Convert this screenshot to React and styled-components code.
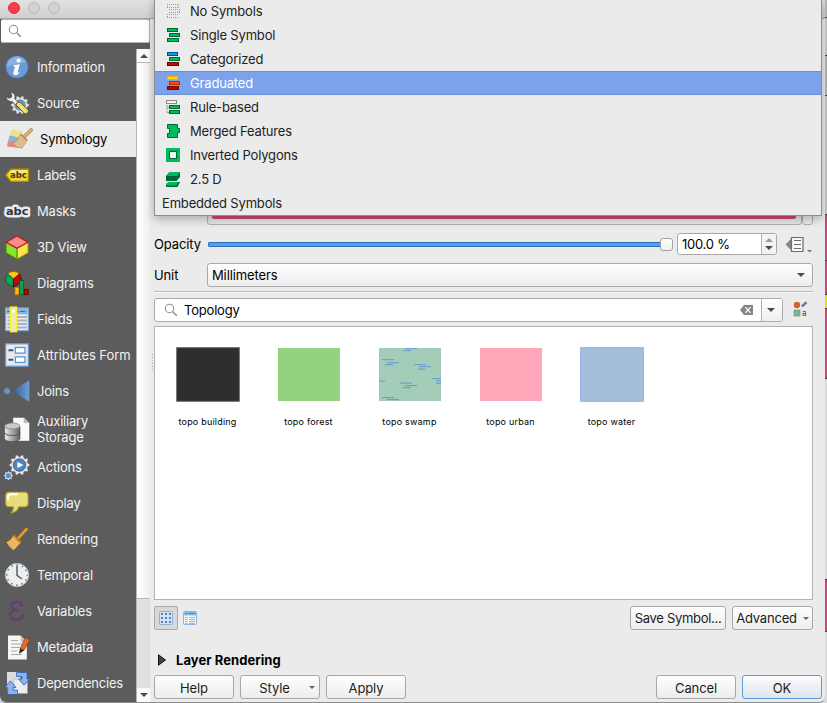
import React from "react";
import styled, { createGlobalStyle, css } from "styled-components";

const Global = createGlobalStyle`
  * { box-sizing: border-box; }
  body { margin: 0; background: #ebebeb; overflow: hidden; }
  svg { display: block; flex: none; }
`;

const Screen = styled.div`
  position: relative;
  display: flex;
  width: 827px;
  height: 703px;
  overflow: hidden;
  background: #dcdcdc;
  color: #111;
  font-family: Inter, "Liberation Sans", sans-serif;
  font-size: 13px;
  letter-spacing: -0.08px;
  line-height: 16px;
`;

const Window = styled.div`
  display: flex;
  flex-direction: column;
  width: 825px;
  height: 703px;
  background: #ebebeb;
  border-bottom: 1px solid #8c8c8c;
  border-radius: 0 0 6px 5px;
`;

const TitleBar = styled.div`
  display: flex;
  align-items: flex-start;
  flex: none;
  gap: 8px;
  height: 19px;
  padding: 2px 8px;
  background: linear-gradient(#e2e2e2, #cfcfcf);
  border-bottom: 1px solid #a6a6a6;
`;

const Light = styled.span`
  width: 12px;
  height: 12px;
  border-radius: 50%;
  background: ${(p) => (p.$on ? "#fc3b48" : "#d2d2d2")};
  border: 1px solid ${(p) => (p.$on ? "#e2303e" : "#b9b9b9")};
`;

const Content = styled.div`
  display: flex;
  flex: 1;
  min-height: 0;
`;

const Sidebar = styled.div`
  display: flex;
  flex-direction: column;
  width: 150px;
  background: #5c5c5c;
  border-bottom-left-radius: 6px;
`;

const SideSearch = styled.div`
  display: flex;
  align-items: center;
  flex: none;
  height: 24px;
  margin-left: 1px;
  padding-left: 7px;
  background: #fff;
  border: 1px solid #b5b5b5;
  border-left: none;
  border-radius: 2px;
`;

const SideBody = styled.div`
  display: flex;
  flex: 1;
  padding-top: 6px;
`;

const NavList = styled.nav`
  display: flex;
  flex-direction: column;
  width: 136px;
`;

const NavItem = styled.div`
  display: flex;
  align-items: center;
  flex: none;
  gap: 8px;
  height: ${(p) => (p.$tall ? 40 : 36)}px;
  padding-left: ${(p) => (p.$active ? 7 : 5)}px;
  color: ${(p) => (p.$active ? "#000" : "#f2f2f2")};
  background: ${(p) => (p.$active ? "#ebebeb" : "transparent")};
  white-space: nowrap;
  ${(p) => p.$active && css`gap: 9px;`}
`;

const NavText = styled.span`
  width: ${(p) => (p.$tall ? "60px" : "auto")};
  letter-spacing: ${(p) => p.$ls ?? -0.2}px;
  white-space: ${(p) => (p.$tall ? "normal" : "nowrap")};
`;

const ScrollBar = styled.div`
  display: flex;
  flex-direction: column;
  width: 14px;
  background: #e0e0e0;
  border-left: 1px solid #b5b5b5;
`;

const ScrollArrow = styled.div`
  display: flex;
  align-items: center;
  justify-content: center;
  height: 14px;
  background: #fbfbfb;
  ${(p) => (p.$top ? css`border-bottom: 1px solid #b8b8b8;` : css`margin-top: auto;`)}
`;

const ScrollThumb = styled.div`
  height: 536px;
  background: linear-gradient(90deg, #fff, #efefef);
  border-bottom: 1px solid #b8b8b8;
`;

const Splitter = styled.div`
  display: flex;
  align-items: flex-start;
  justify-content: flex-end;
  width: 4px;
  padding: 335px 1px 0 0;
`;

const Grip = styled.div`
  width: 1px;
  height: 17px;
  background: repeating-linear-gradient(#aaa 0 1px, transparent 1px 3px);
`;

const Main = styled.main`
  display: flex;
  flex-direction: column;
  width: 659px;
`;

const Row = styled.div`
  display: flex;
  align-items: center;
  flex: none;
  height: ${(p) => p.$h}px;
  margin-top: ${(p) => p.$mt ?? 0}px;
`;

const ColorRow = styled.div`
  display: flex;
  flex: none;
  height: 206px;
  padding: 176px 0 0 53px;
`;

const ColorButton = styled.div`
  width: 595px;
  padding: 0 5px 5px 4px;
  border: 1px solid #b0b0b0;
  border-radius: 3px;
  background: #e6e6e6;
`;

const ColorFill = styled.div`
  height: 100%;
  background: #cb4a75;
  border-radius: 2px;
`;

const ColorMenu = styled.div`
  width: 11px;
  border: 1px solid #b0b0b0;
  border-radius: 3px;
  background: #ededed;
`;

const FieldLabel = styled.span`
  flex: none;
  width: 53px;
  color: #000;
  letter-spacing: -0.12px;
`;

const Slider = styled.div`
  display: flex;
  align-items: center;
  width: 465px;
  margin-left: 1px;
`;

const Track = styled.div`
  flex: 1;
  height: 5px;
  background: #569ff0;
  border: 1px solid #2c6cb8;
  border-right: none;
  border-radius: 2px 0 0 2px;
`;

const Knob = styled.div`
  width: 13px;
  height: 13px;
  border: 1px solid #a2a2a2;
  border-radius: 3px;
  background: linear-gradient(#fff, #f0f0f0);
`;

const SpinBox = styled.div`
  display: flex;
  width: 100px;
  height: 22px;
  margin-left: 4px;
  border: 1px solid #a9a9a9;
  border-radius: 3px;
  background: #fff;
  overflow: hidden;
  color: #000;
`;

const SpinValue = styled.span`
  flex: 1;
  padding: 2px 0 0 4px;
  letter-spacing: -0.25px;
`;

const SpinButtons = styled.div`
  display: flex;
  flex-direction: column;
  align-items: center;
  justify-content: center;
  gap: 4px;
  width: 15px;
  background: #f3f3f3;
  border-left: 1px solid #b5b5b5;
`;

const DefinedOverride = styled.div`
  display: flex;
  align-items: flex-end;
  gap: 3px;
  margin-left: 9px;
`;

const Select = styled.div`
  display: flex;
  align-items: center;
  justify-content: space-between;
  flex: 1;
  height: 24px;
  padding: 0 7px 0 4px;
  color: #000;
  letter-spacing: -0.12px;
  border: 1px solid #aaa;
  border-radius: 3px;
  background: linear-gradient(#fff, #ededed);
`;

const Divider = styled.div`
  flex: none;
  height: 2px;
  margin-top: 4px;
  border-top: 1px solid #b9b9b9;
  border-bottom: 1px solid #fafafa;
`;

const SearchBox = styled.div`
  display: flex;
  width: 629px;
  height: 24px;
  border: 1px solid #aaa;
  border-radius: 3px;
  background: #fff;
  overflow: hidden;
`;

const SearchText = styled.div`
  display: flex;
  align-items: center;
  flex: 1;
  gap: 6px;
  padding: 0 8px 0 9px;
  color: #000;
  letter-spacing: -0.2px;
`;

const Spacer = styled.span`
  flex: 1;
`;

const DropCap = styled.div`
  display: flex;
  align-items: center;
  justify-content: center;
  width: 21px;
  padding-right: 2px;
  border-left: 1px solid #b2b2b2;
  background: linear-gradient(#fff, #eee);
`;

const StyleIcon = styled.div`
  margin-left: 10px;
  margin-top: -2px;
`;

const Gallery = styled.div`
  display: flex;
  align-items: flex-start;
  flex: none;
  height: 274px;
  margin-top: 4px;
  padding: 20px 0 0 2px;
  background: #fff;
  border: 1px solid #b2b2b2;
`;

const Swatch = styled.div`
  display: flex;
  flex-direction: column;
  align-items: center;
  gap: 13px;
  width: 101px;
  color: #000;
  font-size: 9px;
  font-weight: 400;
  letter-spacing: 0.2px;
  line-height: 14px;
`;

const Tool = styled.div`
  display: flex;
  align-items: center;
  justify-content: center;
  width: 24px;
  height: 24px;
  padding-bottom: 1px;
  border-radius: 2px;
  ${(p) => p.$on && css`background: #d8d8d8; border: 1px solid #aaa;`}
`;

const Button = styled.div`
  display: flex;
  align-items: center;
  justify-content: center;
  flex: none;
  width: ${(p) => p.$w}px;
  height: 24px;
  margin-left: ${(p) => p.$ml ?? 0}px;
  padding: ${(p) => p.$pt ?? 1}px 0 0 ${(p) => p.$pl ?? 0}px;
  gap: ${(p) => p.$gap ?? 0}px;
  color: #1c1c1c;
  letter-spacing: ${(p) => p.$ls ?? -0.1}px;
  border: 1px solid ${(p) => (p.$primary ? "#5a9ce6" : "#a8a8a8")};
  border-radius: 3px;
  background: ${(p) =>
    p.$primary ? "linear-gradient(#fbfcfd, #dfe4ec)" : "linear-gradient(#fefefe, #ededed)"};
`;

const GroupTitle = styled.div`
  display: flex;
  align-items: center;
  flex: none;
  gap: 10px;
  height: 18px;
  margin-top: 21px;
  padding-left: 4px;
  color: #000;
  font-weight: 700;
  letter-spacing: 0.06px;
`;

const Footer = styled.div`
  display: flex;
  flex: none;
  width: 668px;
  margin-top: 6px;
`;

const Popup = styled.div`
  position: absolute;
  left: 154px;
  top: -2px;
  width: 668px;
  height: 218px;
  background: #ebebeb;
  border: 1px solid #8e8e8e;
  box-shadow: 0 3px 9px rgba(0, 0, 0, 0.28);
`;

const Option = styled.div`
  display: flex;
  align-items: center;
  gap: 9px;
  height: 24px;
  padding-left: ${(p) => (p.$plain ? 7 : 11)}px;
  color: ${(p) => (p.$on ? "#fff" : "#222")};
  letter-spacing: -0.17px;
  ${(p) => p.$on && css`background: #7ba2eb; box-shadow: inset 0 1px #6b90d4, inset 0 -1px #6b90d4;`}
`;

const MapStrip = styled.div`
  display: flex;
  flex-direction: column;
  width: 2px;
`;

const MapPart = styled.div`
  height: ${(p) => p.$h}px;
  background: ${(p) => p.$c};
  border-bottom: 1px solid #5b3344;
`;

const Triangle = ({ up, w = 8, c = "#4c4c4c" }) => (
  <svg width={w} height={w / 2} viewBox="0 0 8 4">
    <path d={up ? "M0 4L4 0L8 4Z" : "M0 0H8L4 4Z"} fill={c} />
  </svg>
);

const Lens = () => (
  <svg width="14" height="14" viewBox="0 0 14 14" fill="none" stroke="#8c8c8c">
    <circle cx="5.5" cy="5.5" r="4.2" strokeWidth="1.1" />
    <path d="M8.7 8.7L12.8 12.8" strokeWidth="1.5" />
  </svg>
);

const gearPath = (cx, cy, r, n) => {
  let d = "";
  for (let i = 0; i < n * 4; i++) {
    const a = ((i - 0.5) / (n * 4)) * Math.PI * 2;
    const rr = i % 4 < 2 ? r : r * 0.8;
    d += `${i ? "L" : "M"}${(cx + rr * Math.cos(a)).toFixed(2)} ${(cy + rr * Math.sin(a)).toFixed(2)}`;
  }
  return d + "Z";
};

const icons = {
  info: (
    <>
      <circle cx="12" cy="12" r="11.6" fill="#3d75b5" />
      <circle cx="12" cy="12" r="10.8" fill="#6a9bd2" />
      <path d="M2 12A10 10 0 0 1 21 7Q12 8 2 12Z" fill="#8ab1dd" />
      <circle cx="13.6" cy="5.6" r="2.1" fill="#fff" />
      <path d="M8.6 10Q12 9.8 14.8 9L12.6 17.6Q13 18.4 15.3 16.6Q13.3 20.4 10 20.2Q7.8 20 8.4 17.5L10 11.4Q9.3 11 8.2 11.2Z" fill="#fff" />
    </>
  ),
  source: (
    <>
      <path d={gearPath(15, 14, 9.2, 10)} fill="#e4e4e4" stroke="#777" strokeWidth=".5" />
      <circle cx="15" cy="14" r="5.8" fill="#6395cb" />
      <circle cx="14" cy="14" r="3" fill="#5c5c5c" />
      <path d="M5 1.5Q9.5 1 10 5.5L9.8 8L13 11L10.5 13.5L7 10.6Q2 10.6 0.8 6L4.2 7.3L6.8 6L6.5 3Z" fill="#eee" stroke="#444" strokeWidth=".7" />
      <path d="M12 11.5L15 11L24 20L21.5 23L19.5 22.5L11 14Z" fill="#f1d45c" stroke="#5e4a10" strokeWidth=".8" />
      <path d="M13 13L21 21" stroke="#fff3a8" />
    </>
  ),
  labels: (
    <>
      <path d="M.8 12L6 6.2H23.4V18.3H6Z" fill="#f4d629" stroke="#b38c00" strokeWidth="1.2" />
      <path d="M6.4 7.2H22.5V10H4.2Z" fill="#fae977" />
      <text x="5" y="15" fontSize="8.5" fontWeight="700" fill="#3b3b2a">abc</text>
    </>
  ),
  masks: (
    <text x="1" y="15.5" fontSize="11.3" fontWeight="700" fill="#333" stroke="#e6ebf8" strokeWidth="5" strokeLinejoin="round" paintOrder="stroke">abc</text>
  ),
  cube: (
    <>
      <path d="M1 7.3L12 .9L23 7.3V17.8L12 24L1 17.8Z" fill="#8fdc35" />
      <path d="M12 13.3L23 7.3V17.8L12 24Z" fill="#f9e64c" stroke="#b99000" />
      <path d="M1 7.3L12 13.3V24L1 17.8Z" fill="#8ae234" stroke="#3f8800" />
      <path d="M1.2 7.3L12 .9L22.8 7.3L12 13.3Z" fill="#f78d8d" stroke="#c4161c" strokeWidth="1.2" />
    </>
  ),
  diagrams: (
    <>
      <path d="M8.5 8L2.5 2.8Q8.5-2 14.5 2.8Z" fill="#fcca09" stroke="#8a6500" strokeWidth=".8" />
      <path d="M8.5 8L2.5 2.8Q-2 9.5 3 13.5L8 16Z" fill="#08a355" stroke="#03502a" strokeWidth=".8" />
      <path d="M8.5 8L14.5 2.8Q18 7.5 15 12L8.5 16Z" fill="#b90e07" stroke="#600" strokeWidth=".8" />
      <rect x="10" y="16.5" width="4" height="7.2" fill="#fdbb17" stroke="#c07b00" strokeWidth=".8" />
      <rect x="14.7" y="9.5" width="4" height="14.2" fill="#0aa35a" stroke="#035c30" strokeWidth=".8" />
      <rect x="19.3" y="18.2" width="4" height="5.5" fill="#b80b05" stroke="#600" strokeWidth=".8" />
    </>
  ),
  fields: (
    <>
      <rect x=".6" y="1" width="22.8" height="22.6" fill="#e6ebf2" stroke="#7fa4cc" strokeWidth="1.2" />
      <rect x="1.2" y="1.5" width="21.6" height="5.8" fill="#86b5df" />
      <path d="M2 4.5H22" stroke="#41729f" strokeWidth="1.2" strokeDasharray="5 1.5" />
      <path d="M2.5 10H22M2.5 13.5H22M2.5 17H22M2.5 20.5H22" stroke="#a6b3c2" strokeWidth="1.8" />
      <rect x="5.5" y=".2" width="6" height="24.4" fill="#eee8b8" stroke="#fff12a" strokeWidth="1.5" />
      <circle cx="8.5" cy="4.3" r="1.5" fill="#fff" />
    </>
  ),
  form: (
    <>
      <rect x=".6" y=".8" width="22.8" height="22.4" fill="#e8eaed" stroke="#6b9bd0" strokeWidth="1.3" />
      <rect x="10.4" y="4.5" width="9.6" height="5.6" fill="#fff" stroke="#5b94d0" strokeWidth="1.3" />
      <rect x="10.4" y="13.9" width="9.6" height="5.6" fill="#fff" stroke="#5b94d0" strokeWidth="1.3" />
      <path d="M3.5 7.3H8.3M3.5 16.7H8.3" stroke="#35577e" strokeWidth="2" />
    </>
  ),
  joins: (
    <>
      <defs>
        <linearGradient id="joinFill"><stop stopColor="#315a8b" /><stop offset="1" stopColor="#6da0d8" /></linearGradient>
      </defs>
      <circle cx="2" cy="12" r="3" fill="#6696c8" />
      <path d="M7.2 12L24.3 1.3V22.7Z" fill="url(#joinFill)" />
    </>
  ),
  storage: (
    <>
      <path d="M8 .5H19L24.5 6V24H8Z" fill="#fafafa" stroke="#555" strokeWidth=".4" />
      <path d="M18.7.5V6H24.5Z" fill="#b9b9b9" />
      <defs>
        <linearGradient id="drum"><stop stopColor="#efefef" /><stop offset="1" stopColor="#5f5f5f" /></linearGradient>
      </defs>
      <path d="M-.5 9.5V21.5Q0 24.5 7.3 24.5T15 21.5V9.5Z" fill="url(#drum)" stroke="#4a4a4a" strokeWidth=".6" />
      <ellipse cx="7.3" cy="9" rx="7.7" ry="3" fill="#c9c9c9" stroke="#777" strokeWidth=".7" />
      <path d="M-.5 15.5Q1 18.5 7.3 18.5T15 15.5" fill="none" stroke="#555" />
    </>
  ),
  actions: (
    <>
      <path d={gearPath(14.5, 10, 10.2, 10)} fill="#e9e9e9" stroke="#777" strokeWidth=".5" />
      <circle cx="14.5" cy="10" r="6.3" fill="#4f84bf" stroke="#2f5c91" strokeWidth=".8" />
      <path d="M12.3 6.8L18.3 10L12.3 13.2Z" fill="#fff" />
      <path d={gearPath(3.4, 20.6, 4.4, 8)} fill="#d8e2ef" />
      <circle cx="3.4" cy="20.6" r="2.7" fill="#5b92cc" />
    </>
  ),
  display: (
    <>
      <path d="M4 1.3H19.5Q23 1.3 23 5V12Q23 15.8 19.5 15.8H13.5Q12.5 20.5 6.5 21.8Q8.8 19 8.5 15.8H4Q.8 15.8.8 12V5Q.8 1.3 4 1.3Z" fill="#e8dc7d" stroke="#bfa52c" strokeWidth="1.1" />
      <path d="M3 9V6Q3 3.3 6 3.3H13" fill="none" stroke="#fff" strokeWidth="2" />
    </>
  ),
  broom: (
    <>
      <path d="M13 11.5L21.5 2.2" stroke="#9c6314" strokeWidth="3.8" strokeLinecap="round" />
      <path d="M13 11.5L21.5 2.2" stroke="#e39a31" strokeWidth="2.5" strokeLinecap="round" />
      <path d="M8.5 8L16 15.5L8.7 23.4Q3.5 20 1.2 15.2Q6 13.5 8.5 8Z" fill="#edba61" stroke="#9c6314" strokeWidth=".7" />
      <path d="M9 11L13 15M6.5 14L10.7 18.5M4 16L8 20.5" stroke="#d29c48" strokeWidth=".7" />
      <path d="M8.5 8L16 15.5" stroke="#b97a1c" strokeWidth="2" />
    </>
  ),
  symbology: (
    <>
      <path d="M4.5 2.5L15 4L12 11L2.5 9Z" fill="#efe08a" />
      <path d="M2.5 8.5L12 10.5L10 16L1 14.5Z" fill="#85b3e0" />
      <path d="M1 14L10 15L13 21L0 19.5Z" fill="#e98585" />
      <path d="M17 10L24.2 3" stroke="#b08951" strokeWidth="3.6" strokeLinecap="round" />
      <path d="M17 10L24.2 3" stroke="#dbb27a" strokeWidth="2.2" strokeLinecap="round" />
      <path d="M13.5 7L20 13.5L15 21.3Q9 20.5 6.5 16.5Q12 13 13.5 7Z" fill="#dfc192" stroke="#b08c5b" strokeWidth=".7" />
      <path d="M13 12L16.5 15.5M10.8 14.5L14 18" stroke="#c2a069" strokeWidth=".7" />
      <path d="M13.5 7L20 13.5" stroke="#bd9258" strokeWidth="2" />
    </>
  ),
  clock: (
    <>
      <circle cx="12" cy="12" r="11.6" fill="#eeeeec" stroke="#c9c9c9" strokeWidth=".8" />
      <circle cx="12" cy="12" r="10.2" fill="none" stroke="#4d86c0" strokeWidth="1.7" strokeDasharray="1.5 3.84" strokeDashoffset=".75" />
      <path d="M12 2.7V12.3L17 16" fill="none" stroke="#5c5c5c" strokeWidth="1.5" />
    </>
  ),
  epsilon: (
    <>
      <path d="M17 6.2C16 2.2 7.6 1.6 6.8 6.6C6.5 9.6 9 11 13.2 11C8 11 4.9 12.6 5 16C5.4 22.2 16.2 22.2 17.6 16.4" fill="none" stroke="#673b72" strokeWidth="2.2" strokeLinecap="round" />
      <circle cx="16.3" cy="6" r="1.8" fill="#673b72" />
    </>
  ),
  metadata: (
    <>
      <path d="M3 .4H15.5L21.8 7V24.4H3Z" fill="#f5f5f5" />
      <path d="M15.5.4V7H21.8Z" fill="#c7c7c7" />
      <path d="M6 5.5H13M6 9H17M6 12.5H15M6 16H12M6 19.5H17" stroke="#aaa" strokeWidth="1.1" />
      <path d="M15.4 13.2L20 2.8L24.7 4.6L19.3 15L14.5 18.2Z" fill="#e16a2e" stroke="#9a3e11" strokeWidth=".7" />
      <path d="M15.3 13.2L19.3 15L14.3 18.5Z" fill="#3b2a22" />
    </>
  ),
  deps: (
    <>
      <rect x="2" y="1" width="13.5" height="18" fill="#ddd" />
      <rect x="9" y="8" width="13.5" height="14.5" fill="#eee" stroke="#999" strokeWidth=".4" />
      <path d="M11.5 1.5H22V8H24.6L19 14.2L13.5 8H17V5.5H11.5Z" fill="#8db2f0" stroke="#2f62b6" strokeWidth=".8" />
      <path d="M12.5 23.5H2.6V16.5H-.2L5.5 9.8L11 16.5H8V19H12.5Z" fill="#8db2f0" stroke="#2f62b6" strokeWidth=".8" />
    </>
  ),
};

const Icon = ({ name }) => (
  <svg width="24" height="25" viewBox="0 0 24 25" overflow="visible" fontFamily="'DejaVu Sans', sans-serif" letterSpacing="0">
    {icons[name]}
  </svg>
);

const nav = [
  ["info", "Information"],
  ["source", "Source"],
  ["symbology", "Symbology"],
  ["labels", "Labels"],
  ["masks", "Masks"],
  ["cube", "3D View"],
  ["diagrams", "Diagrams"],
  ["fields", "Fields"],
  ["form", "Attributes Form", -0.06],
  ["joins", "Joins"],
  ["storage", "Auxiliary Storage"],
  ["actions", "Actions"],
  ["display", "Display"],
  ["broom", "Rendering"],
  ["clock", "Temporal"],
  ["epsilon", "Variables"],
  ["metadata", "Metadata"],
  ["deps", "Dependencies"],
];

const Bars = ({ colors }) => (
  <>
    {colors.map(([fill, stroke], i) => (
      <rect key={i} x={i === 1 ? 3.5 : 1.5} y={0.5 + i * 5} width={i === 0 ? 10 : i === 1 ? 10 : 11} height="3" fill={fill} stroke={stroke} />
    ))}
  </>
);

const green = ["#00bb5c", "#006837"];

const renderers = [
  ["No Symbols", (
    <g fill="none" stroke="#9b9b9b" strokeDasharray="1 1">
      <path d="M1 .5H12M1 3.5H12M3 5.5H14M3 8.5H14M1 10.5H12M1 13.5H12M1.5 0V4M13.5 5V9M1.5 10V14M12 1L13 4" />
    </g>
  )],
  ["Single Symbol", <Bars colors={[green, green, green]} />],
  ["Categorized", <Bars colors={[["#13a0d2", "#0649ac"], green, ["#c11200", "#660700"]]} />],
  ["Graduated", <Bars colors={[["#ffdf00", "#ffa800"], ["#ff5000", "#c52900"], ["#c20000", "#6b0808"]]} />],
  ["Rule-based", (
    <>
      <rect x=".5" y=".5" width="10" height="3" fill="#f3f3f3" stroke="#8a8a8a" />
      <path d="M1 5V12.5M1 7.5H3M1 12.5H3" stroke="#999" strokeDasharray="2 1" fill="none" />
      <rect x="3.5" y="5.5" width="10" height="3" fill="#00bb5c" stroke="#006837" />
      <rect x="3.5" y="10.5" width="10" height="3" fill="#00bb5c" stroke="#006837" />
    </>
  )],
  ["Merged Features", <path d="M1.5.5H11.5V4.5H13.5V8.5H11.5V13.5H1.5V9.5H3.5V4.5H1.5Z" fill={green[0]} stroke={green[1]} />],
  ["Inverted Polygons", (
    <>
      <rect width="14" height="14" fill={green[0]} />
      <rect x="3.5" y="3.5" width="7" height="7" fill="#f5f5f5" stroke={green[1]} />
    </>
  )],
  ["2.5 D", (
    <>
      <path d="M0 4L3.5 0H14V5L10.5 9H0Z" fill={green[1]} />
      <path d="M3.5 0H14L11.5 4H1Z" fill={green[0]} />
      <path d="M3 10H14L11.5 15H0V12Z" fill={green[1]} />
      <path d="M2.5 10H12L10.5 13.5H0V12Z" fill={green[0]} />
    </>
  )],
];

const swampDashes = [
  [26, 0, 12], [24, 2, 8], [3, 11, 12], [8, 14, 12], [6, 16, 8],
  [35, 16, 12], [40, 18, 12], [39, 20.5, 7], [0, 32.5, 6], [0, 30, 1],
  [53, 30, 9], [57, 32, 5], [57, 34.5, 5], [21, 34.5, 12], [26, 37, 12],
  [24, 39, 8], [3, 49, 12], [8, 51, 12],
];

const swatches = [
  ["topo building", "#2e2e2e", "#5c5858"],
  ["topo forest", "#95d280"],
  ["topo swamp", "#a4cdb9"],
  ["topo urban", "#ffa6b8"],
  ["topo water", "#a5bedc", "#83addc"],
];

export default function App() {
  return (
    <Screen>
      <Global />
      <Window>
        <TitleBar>
          <Light $on />
          <Light />
          <Light />
        </TitleBar>
        <Content>
          <Sidebar>
            <SideSearch><Lens /></SideSearch>
            <SideBody>
              <NavList>
                {nav.map(([icon, label, spacing]) => (
                  <NavItem key={icon} $active={icon === "symbology"} $tall={icon === "storage"}>
                    <Icon name={icon} />
                    <NavText $tall={icon === "storage"} $ls={spacing}>{label}</NavText>
                  </NavItem>
                ))}
              </NavList>
              <ScrollBar>
                <ScrollArrow $top><Triangle up /></ScrollArrow>
                <ScrollThumb />
                <ScrollArrow><Triangle /></ScrollArrow>
              </ScrollBar>
            </SideBody>
          </Sidebar>
          <Splitter><Grip /></Splitter>
          <Main>
            <ColorRow>
              <ColorButton><ColorFill /></ColorButton>
              <ColorMenu />
            </ColorRow>
            <Row $h={24} $mt={7}>
              <FieldLabel>Opacity</FieldLabel>
              <Slider><Track /><Knob /></Slider>
              <SpinBox>
                <SpinValue>100.0 %</SpinValue>
                <SpinButtons><Triangle up c="#9a9a9a" /><Triangle /></SpinButtons>
              </SpinBox>
              <DefinedOverride>
                <svg width="18" height="17" viewBox="0 0 18 17">
                  <path d="M0 8.5L6 2.5V14.5Z" fill="#898989" stroke="#555" strokeWidth=".6" />
                  <path d="M5.5 1H17V16H5.5Z" fill="#f8f8f8" />
                  <path d="M5.5 1.5H17V15.5H5.5ZM8 4.5H15M8 8.5H15M8 12.5H15" stroke="#6b6b6b" strokeWidth="1.2" fill="none" />
                </svg>
                <Triangle w={5} c="#777" />
              </DefinedOverride>
            </Row>
            <Row $h={24} $mt={7}>
              <FieldLabel>Unit</FieldLabel>
              <Select>Millimeters<Triangle /></Select>
            </Row>
            <Divider />
            <Row $h={24} $mt={5}>
              <SearchBox>
                <SearchText>
                  <Lens />
                  Topology
                  <Spacer />
                  <svg width="13" height="10" viewBox="0 0 13 10">
                    <path d="M0 5L4 0H13V10H4Z" fill="#858585" />
                    <path d="M5.3 2.2L10.5 7.8M10.5 2.2L5.3 7.8" stroke="#fff" strokeWidth="1.2" />
                  </svg>
                </SearchText>
                <DropCap><Triangle /></DropCap>
              </SearchBox>
              <StyleIcon>
                <svg width="16" height="16" viewBox="0 0 16 16">
                  <circle cx="4" cy="4" r="3.2" fill="#d3602f" />
                  <path d="M9 5.5L13.5 1.2" stroke="#4e76a2" strokeWidth="2.3" />
                  <rect x="1" y="9" width="6" height="6" fill="#83b292" stroke="#659575" strokeWidth=".6" />
                  <text x="9" y="15" fontSize="8" fill="#444">a</text>
                </svg>
              </StyleIcon>
            </Row>
            <Gallery>
              {swatches.map(([label, fill, edge]) => (
                <Swatch key={label}>
                  <svg width="64" height="55" viewBox="-1 -1 64 55">
                    <rect width="62" height="53" fill={fill} />
                    {edge && <rect x="-.3" y="-.3" width="62.6" height="53.6" fill="none" stroke={edge} />}
                    {label === "topo swamp" &&
                      swampDashes.map(([x, y, w], i) => (
                        <rect key={i} x={x} y={y} width={w} height="1.2" fill="#6f9fcb" />
                      ))}
                  </svg>
                  {label}
                </Swatch>
              ))}
            </Gallery>
            <Row $h={24} $mt={6}>
              <Tool $on>
                <svg width="14" height="14" viewBox="0 0 14 14">
                  <rect x=".5" y=".5" width="13" height="13" rx="1" fill="#d7e3ef" stroke="#8fb3d9" />
                  <path d="M2 3H12M2 7H12M2 11H12" stroke="#4a86c5" strokeWidth="2" strokeDasharray="2 2" />
                </svg>
              </Tool>
              <Tool>
                <svg width="14" height="14" viewBox="0 0 14 14">
                  <rect x=".5" y=".5" width="13" height="13" rx="1" fill="#f2f4f6" stroke="#8fb3d9" />
                  <rect x="1" y="1" width="12" height="3.5" fill="#8abfe8" />
                  <path d="M2 2.5H4.5M6 2.5H12" stroke="#4783b7" />
                  <path d="M2 6.5H4.5M6 6.5H12M2 8.5H4.5M6 8.5H12M2 10.5H4.5M6 10.5H12M2 12.5H4.5M6 12.5H12" stroke="#9fb7cd" />
                </svg>
              </Tool>
              <Spacer />
              <Button $w={96} $pt={0} $ls={-0.3}>Save Symbol...</Button>
              <Button $w={81} $ml={6} $gap={6} $pt={0} $ls={-0.2}>Advanced<Triangle w={6} c="#666" /></Button>
            </Row>
            <GroupTitle>
              <svg width="8" height="12" viewBox="0 0 8 12"><path d="M.5.8L7.5 6L.5 11.2Z" fill="#444" stroke="#111" /></svg>
              Layer Rendering
            </GroupTitle>
            <Footer>
              <Button $w={80}>Help</Button>
              <Button $w={80} $ml={6} $gap={19} $pl={14}>
                Style<Triangle w={6} c="#666" />
              </Button>
              <Button $w={80} $ml={6}>Apply</Button>
              <Spacer />
              <Button $w={80}>Cancel</Button>
              <Button $w={80} $ml={6} $primary>OK</Button>
            </Footer>
          </Main>
        </Content>
      </Window>
      <MapStrip>
        <MapPart $h={18} $c="#bbb" />
        <MapPart $h={38} $c="#ccc" />
        <MapPart $h={40} $c="#b5b5b0" />
        <MapPart $h={119} $c="#c9c9c9" />
        <MapPart $h={46} $c="#c8457a" />
        <MapPart $h={34} $c="#c8457a" />
        <MapPart $h={14} $c="#e5e200" />
        <MapPart $h={70} $c="#c8457a" />
        <MapPart $h={201} $c="#d8d8d8" />
        <MapPart $h={52} $c="#c8457a" />
      </MapStrip>
      <Popup>
        {renderers.map(([label, art]) => (
          <Option key={label} $on={label === "Graduated"}>
            <svg width="15" height="15" viewBox="0 0 15 15">{art}</svg>
            {label}
          </Option>
        ))}
        <Option $plain>Embedded Symbols</Option>
      </Popup>
    </Screen>
  );
}
